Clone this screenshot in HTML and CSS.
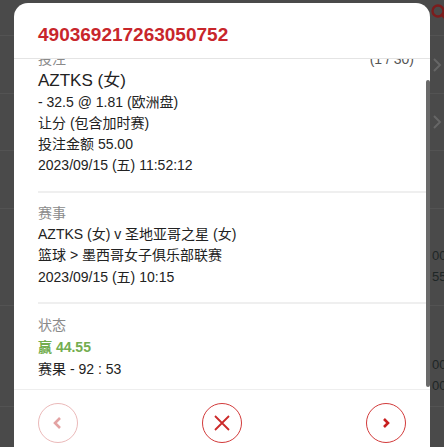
FILE: index.html
```html
<!DOCTYPE html>
<html lang="zh-CN">
  <head>
    <meta charset="UTF-8" />
    <meta name="viewport" content="width=device-width, initial-scale=1.0" />
    <title>注单详情</title>
    <link rel="stylesheet" href="styles.css">
  </head>
  <body>
    <div class="page">
      <div class="topbar">
        <svg class="search" width="20" height="20" viewBox="0 0 20 20">
          <circle cx="8" cy="8" r="5.5" fill="none" stroke="#7c1c1c" stroke-width="2.4" />
          <line x1="12" y1="12" x2="17" y2="17" stroke="#7c1c1c" stroke-width="2.6" stroke-linecap="round" />
        </svg>
      </div>
      <div class="row r58"><svg class="chev" width="10" height="16" viewBox="0 0 10 16"><polyline points="2,2 8,8 2,14" fill="none" stroke="#666" stroke-width="2" /></svg></div>
      <div class="row r57"><svg class="chev" width="10" height="16" viewBox="0 0 10 16"><polyline points="2,2 8,8 2,14" fill="none" stroke="#666" stroke-width="2" /></svg></div>
      <div class="row r58"></div>
      <div class="row r97"><div class="amt">00<br>55</div></div>
      <div class="row r100"><div class="amt low">00<br>00</div></div>
    </div>

    <div class="modal">
      <div class="modal-head">
        <h1 class="ticket">490369217263050752</h1>
      </div>

      <div class="modal-body">
        <div class="scroller">
          <section class="block">
            <div class="label-row">
              <span class="label">投注</span>
              <span class="count">(1 / 30)</span>
            </div>
            <div class="pick">AZTKS (女)</div>
            <div class="line">- 32.5 @ 1.81 (欧洲盘)</div>
            <div class="line">让分 (包含加时赛)</div>
            <div class="line">投注金额 55.00</div>
            <div class="line">2023/09/15 (五) 11:52:12</div>
          </section>

          <section class="block">
            <div class="label">赛事</div>
            <div class="line">AZTKS (女) v 圣地亚哥之星 (女)</div>
            <div class="line">篮球 &gt; 墨西哥女子俱乐部联赛</div>
            <div class="line">2023/09/15 (五) 10:15</div>
          </section>

          <section class="block status">
            <div class="label">状态</div>
            <div class="line win">赢 44.55</div>
            <div class="line">赛果 - 92 : 53</div>
          </section>
        </div>
        <div class="thumb"></div>
      </div>

      <div class="modal-foot">
        <button class="circle disabled" aria-label="上一个">
          <svg width="12" height="14" viewBox="0 0 12 14"><polyline points="8,2 3,7 8,12" fill="none" stroke="#e3a3a3" stroke-width="2.6" /></svg>
        </button>
        <button class="circle" aria-label="关闭">
          <svg width="18" height="18" viewBox="0 0 18 18"><path d="M2 2 L16 16 M16 2 L2 16" stroke="#cc2a2a" stroke-width="1.8" /></svg>
        </button>
        <button class="circle" aria-label="下一个">
          <svg width="10" height="12" viewBox="0 0 10 12"><polyline points="3,2 7,6 3,10" fill="none" stroke="#c81f1f" stroke-width="2.6" /></svg>
        </button>
      </div>
    </div>
  </body>
</html>
```

FILE: styles.css
```css
html,
body {
  margin: 0;
  height: 100%;
  overflow: hidden;
}

body {
  background: #4a4a4a;
  font-family: "Liberation Sans", "Noto Sans CJK SC", sans-serif;
  font-size: 14px;
  color: #222;
}

/* dimmed page behind the dialog */
.page {
  height: 100%;
}
.topbar {
  height: 35px;
  border-bottom: 1px solid #535353;
  display: flex;
  justify-content: flex-end;
  align-items: flex-start;
}
.search {
  margin-top: 3px;
  margin-right: -6px;
}
.row {
  border-bottom: 1px solid #535353;
  display: flex;
  justify-content: flex-end;
  align-items: center;
}
.r57 {
  height: 56px;
}
.r58 {
  height: 57px;
}
.r97 {
  height: 96px;
}
.r100 {
  height: 100px;
}
.chev {
  margin-right: 2px;
}
.amt {
  width: 12px;
  overflow: hidden;
  font-size: 13px;
  line-height: 21px;
  color: #1e2626;
  margin-top: 18px;
}
.amt.low {
  margin-top: 38px;
}

/* dialog */
.modal {
  position: absolute;
  left: 14px;
  top: 3px;
  width: 416px;
  height: 470px;
  background: #fff;
  border-radius: 14px;
  overflow: hidden;
}
.modal-head {
  height: 47px;
  padding: 8px 24px 0;
  display: flex;
  align-items: center;
  border-bottom: 1px solid #e4e4e4;
}
.ticket {
  margin: 0;
  font-size: 19px;
  font-weight: bold;
  color: #c8262b;
}

.modal-body {
  position: relative;
  height: 330px;
  overflow: hidden;
}
.scroller {
  margin-top: -20px;
}
.block {
  margin-left: 24px;
  padding: 10px 16px 14px 0;
  border-bottom: 2px solid #efefef;
  line-height: 21.3px;
}
.block.status {
  line-height: 22px;
}
.label-row {
  display: flex;
  justify-content: space-between;
}
.label {
  color: #8a8a8a;
}
.count {
  color: #555;
}
.pick {
  font-size: 17px;
}
.win {
  color: #73ad4f;
  font-weight: bold;
}
.thumb {
  position: absolute;
  right: 0;
  top: 21px;
  width: 4px;
  height: 307px;
  background: #6a6a6a;
  border-radius: 2px;
}

.modal-foot {
  border-top: 1px solid #eeeeee;
  padding: 13px 24px;
  display: flex;
  justify-content: space-between;
}
.circle {
  width: 40px;
  height: 40px;
  padding: 0;
  border: 1px solid #d23a3a;
  border-radius: 50%;
  background: #fff;
  display: flex;
  align-items: center;
  justify-content: center;
  cursor: pointer;
}
.circle.disabled {
  border-color: #ebb9b9;
  cursor: default;
}
```
